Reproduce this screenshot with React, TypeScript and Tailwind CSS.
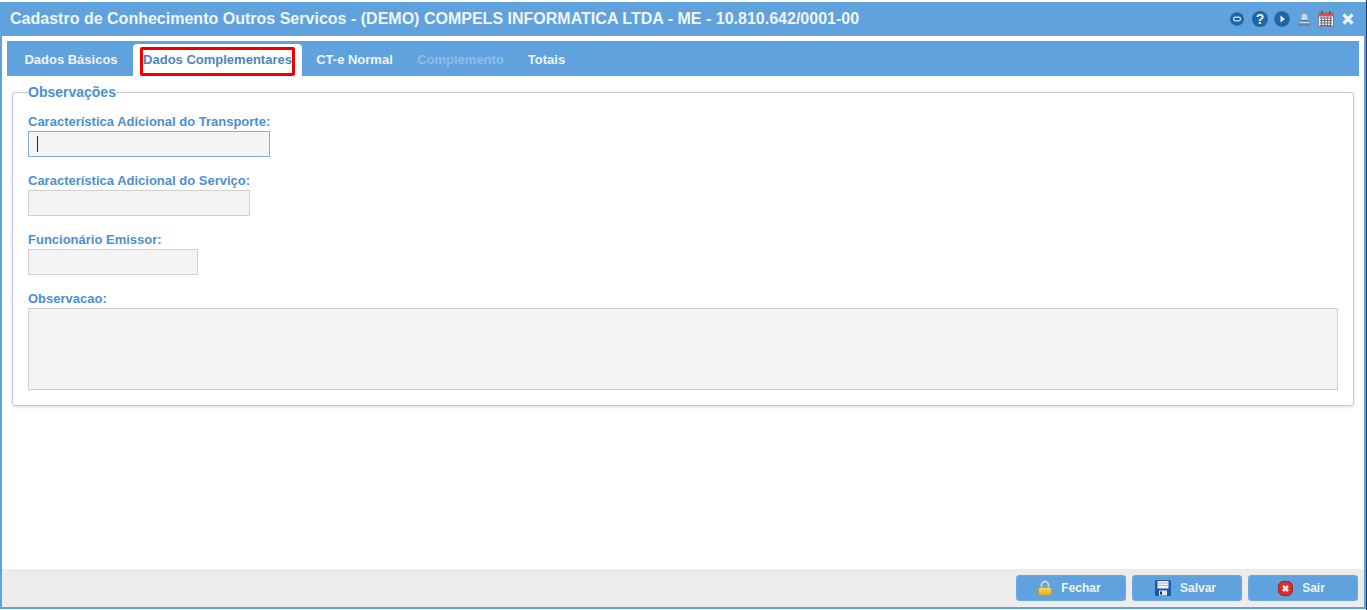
import React from 'react';

const sans = "font-['Liberation_Sans',Arial,sans-serif]";

// Toolbar icons at the top right of the window
const ChatIcon = () => (
  <svg width="14" height="14" viewBox="0 0 14 14">
    <ellipse cx="7" cy="7" rx="7" ry="6.800" fill="#1f66a5" />
    <rect x="3.500" y="5.200" width="7" height="3.600" rx="1.800" fill="none" stroke="#d5e4f3" strokeWidth="1.200" />
  </svg>
);

const HelpIcon = () => (
  <svg width="16" height="16" viewBox="0 0 16 16">
    <circle cx="8" cy="8" r="8" fill="#1f66a5" />
    <text x="8" y="13" textAnchor="middle" fontSize="14" fontWeight="700" fill="#eef4fa" fontFamily="Liberation Sans">?</text>
  </svg>
);

const PlayIcon = () => (
  <svg width="16" height="16" viewBox="0 0 16 16">
    <circle cx="8" cy="8" r="7.800" fill="#1f66a5" />
    <path d="M6.500 4.500l4.500 3.500-4.500 3.500z" fill="#eef4fa" />
  </svg>
);

const BellIcon = () => (
  <svg width="13" height="14" viewBox="0 0 13 14">
    <rect x="5.500" y="0" width="2" height="2" fill="#7f8c99" />
    <path d="M4.500 1.500h4C9.500 3 9.500 6 10 8c.4 1.500 1.500 2.500 2.500 3.500H.5C1.500 10.500 2.600 9.500 3 8c.5-2 .5-5 1.500-6.500z" fill="#cfd5db" stroke="#8d99a5" strokeWidth=".5" />
    <rect x="2.500" y="8" width="8" height="1.500" fill="#1f70bf" />
    <rect x=".5" y="11.500" width="12" height="2.500" fill="#76838f" />
  </svg>
);

const CalendarIcon = () => (
  <svg width="16" height="16" viewBox="0 0 16 16">
    <rect x=".5" y="1.500" width="15" height="14" fill="#e9edf1" stroke="#7a808a" />
    <rect x="1" y="2" width="14" height="3.500" fill="#d0555c" />
    <rect x="3.500" y="0" width="1.500" height="3" fill="#555" />
    <rect x="11" y="0" width="1.500" height="3" fill="#555" />
    <path d="M2 7h12M2 9.500h12M2 12h12M2 14.500h12M3.500 6v9M6.500 6v9M9.500 6v9M12.500 6v9" stroke="#6b7380" strokeWidth="1.100" />
  </svg>
);

const LockIcon = () => (
  <svg width="14" height="16" viewBox="0 0 14 16">
    <defs>
      <linearGradient id="lockBody" x1="0" y1="0" x2="0" y2="1">
        <stop offset="0" stopColor="#f8dc5a" />
        <stop offset="1" stopColor="#e3a51c" />
      </linearGradient>
    </defs>
    <path d="M3.500 8V5a3.500 3.500 0 0 1 7 0v3" fill="none" stroke="#ced4da" strokeWidth="1.800" />
    <rect x=".5" y="7.500" width="13" height="8" rx="1" fill="url(#lockBody)" stroke="#b98c18" strokeWidth=".6" />
  </svg>
);

const SaveIcon = () => (
  <svg width="16" height="16" viewBox="0 0 16 16">
    <rect width="16" height="16" rx="1.500" fill="#1c58ad" />
    <rect x="2.500" y="1" width="11" height="7.500" fill="#eef2f6" />
    <path d="M3 3h10M3 5.500h10" stroke="#a9bcd3" strokeWidth="1" />
    <rect x="4" y="10.500" width="8" height="5" fill="#e3e7ec" />
    <rect x="5" y="11.500" width="2" height="3" fill="#1e2b3c" />
  </svg>
);

const ExitIcon = () => (
  <svg width="15" height="15" viewBox="0 0 15 15">
    <rect x=".5" y=".5" width="14" height="14" rx="5" fill="#d9302b" stroke="#9e211d" />
    <path d="M5 5l5 5M10 5l-5 5" stroke="#f9e4e4" strokeWidth="2.600" />
  </svg>
);

const tabs = [
  { label: 'Dados Básicos', cls: 'w-[126px] pl-[2px] text-[#f0f5fa]' },
  { label: 'Dados Complementares', active: true },
  { label: 'CT-e Normal', cls: 'w-[101px] pl-[4px] text-[#f0f5fa]' },
  { label: 'Complemento', cls: 'w-[111px] pl-[4px] text-[#8fbde6]' },
  { label: 'Totais', cls: 'w-[61px] pl-[4px] text-[#f0f5fa]' },
];

const Field: React.FC<{ label: string; width: string; focused?: boolean }> = ({ label, width, focused }) => (
  <div className="flex flex-col h-[59px]">
    <label className="text-[#4a90d2] text-[13px] font-bold leading-[20px] h-[19px]">{label}</label>
    <div
      className={`h-[26px] ${width} bg-[#f4f4f4] border flex items-center pl-[8px] ${
        focused ? 'border-[#7fb0e0]' : 'border-[#d0d0d0]'
      }`}
    >
      {focused && <span className="block w-px h-[16px] bg-[#222]" />}
    </div>
  </div>
);

const FooterButton: React.FC<{ label: string; icon: React.ReactNode }> = ({ label, icon }) => (
  <button className="w-[110px] h-[26px] bg-[#5fa2dd] border border-[#6ba9e0] rounded-[3px] flex items-center justify-center gap-[9px] pr-[3px] text-[#eef4fa] text-[12px] font-bold">
    {icon}
    <span>{label}</span>
  </button>
);

export default function App() {
  return (
    <div className={`${sans} h-[610px] w-full flex flex-col bg-white pt-[2px] pb-px border-r border-[#1c3f63]`}>
      <div className="flex-1 flex flex-col border-x-2 border-b-2 border-[#5fa2dd] min-h-0">
        {/* Title bar */}
        <div className="h-[34px] shrink-0 bg-[#5fa2dd] flex items-center justify-between pb-px pl-[10px] pr-[12px] -mx-[2px]">
          <span className="text-[#f0f5fa] text-[16px] tracking-[0.01px] font-bold whitespace-nowrap">
            Cadastro de Conhecimento Outros Servicos - (DEMO) COMPELS INFORMATICA LTDA - ME - 10.810.642/0001-00
          </span>
          <div className="flex items-center">
            <ChatIcon />
            <span className="ml-[8px]">
              <HelpIcon />
            </span>
            <span className="ml-[6px]">
              <PlayIcon />
            </span>
            <span className="ml-[8px]">
              <BellIcon />
            </span>
            <span className="ml-[7px]">
              <CalendarIcon />
            </span>
            <svg width="12" height="12" viewBox="0 0 12 12" className="ml-[8px]">
              <path d="M1.500 1.500l9 9M10.500 1.500l-9 9" stroke="#eaf1f8" strokeWidth="3.200" />
            </svg>
          </div>
        </div>

        {/* Tabs */}
        <div className="flex-1 flex flex-col min-h-0 px-[5px] pt-[5px]">
          <div className="h-[35px] shrink-0 bg-[#5fa2dd] flex items-end text-[13px] font-bold">
            {tabs.map(t =>
              t.active ? (
                <div key={t.label} className="h-[32px] w-[169px] bg-white rounded-t-[4px] flex items-center justify-center text-[#4b86bd] relative">
                  {t.label}
                  <span className="absolute left-[7px] top-[3px] w-[155px] h-[29px] border-[3px] border-[#ee0000] rounded-[2px]" />
                </div>
              ) : (
                <div key={t.label} className={`h-[32px] flex items-center justify-center ${t.cls}`}>
                  {t.label}
                </div>
              ),
            )}
          </div>

          <fieldset className="mt-[8px] mx-[5px] h-[322px] border border-[#c8c8c8] rounded-[3px] px-[15px] shadow-[0_1px_3px_rgba(0,0,0,0.15)] min-w-0">
            <legend className="text-[#4a90d2] text-[14px] font-bold leading-[16px] px-0">Observações</legend>
            <div className="pt-[12px] flex flex-col">
              <Field label="Característica Adicional do Transporte:" width="w-[242px]" focused />
              <Field label="Característica Adicional do Serviço:" width="w-[222px]" />
              <Field label="Funcionário Emissor:" width="w-[170px]" />
              <label className="text-[#4a90d2] text-[13px] font-bold leading-[20px] h-[19px]">Observacao:</label>
              <div className="h-[82px] bg-[#f4f4f4] border border-[#d0d0d0]" />
            </div>
          </fieldset>
        </div>

        {/* Footer */}
        <div className="h-[38px] shrink-0 bg-[#ececec] flex items-center justify-end gap-[6px] pr-[6px]">
          <FooterButton label="Fechar" icon={<LockIcon />} />
          <FooterButton label="Salvar" icon={<SaveIcon />} />
          <FooterButton label="Sair" icon={<ExitIcon />} />
        </div>
      </div>
    </div>
  );
}
